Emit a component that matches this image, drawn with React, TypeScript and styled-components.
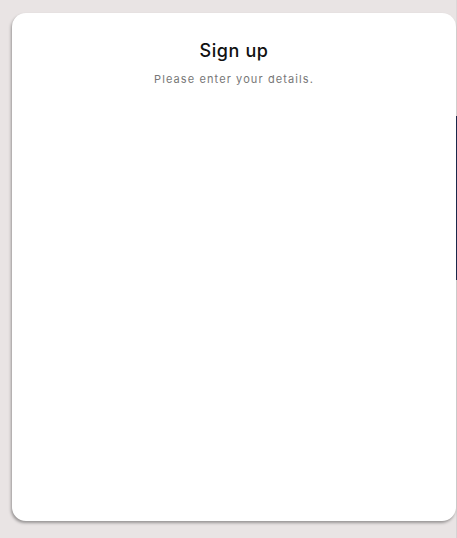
import React from "react";
import styled, { createGlobalStyle } from "styled-components";

const Global = createGlobalStyle`
  html, body { margin: 0; padding: 0; background: #e9e4e4; }
  body { font-family: Inter, "Noto Sans", sans-serif; }
`;

const Page = styled.div`
  display: flex;
  align-items: flex-start;
  width: 457px;
  height: 538px;
  padding: 13px 0 0 12px;
  box-sizing: border-box;
`;

const Card = styled.main`
  width: 444px;
  height: 508px;
  background: #ffffff;
  border-radius: 14px;
  box-shadow: -1px 2px 3px rgba(0, 0, 0, 0.35);
  display: flex;
  flex-direction: column;
  align-items: center;
  padding-top: 27px;
  box-sizing: border-box;
  position: relative;
  z-index: 1;
`;

const Side = styled.div`
  flex: 1;
  height: 538px;
  margin-top: -13px;
  background: linear-gradient(
    to bottom,
    #dcd8d8 0px,
    #dcd8d8 116px,
    #1c2a4e 116px,
    #1c2a4e 280px,
    #d6d4d4 280px
  );
`;

const Title = styled.h1`
  margin: 0;
  font-size: 18px;
  line-height: 22px;
  font-weight: 500;
  color: #111111;
  letter-spacing: 0.6px;
`;

const Subtitle = styled.p`
  margin: 11px 0 0;
  font-size: 11px;
  line-height: 13px;
  color: #777777;
  letter-spacing: 1.1px;
`;

export default function App() {
  return (
    <>
      <Global />
      <Page>
        <Card>
          <Title>Sign up</Title>
          <Subtitle>Please enter your details.</Subtitle>
        </Card>
        <Side />
      </Page>
    </>
  );
}
